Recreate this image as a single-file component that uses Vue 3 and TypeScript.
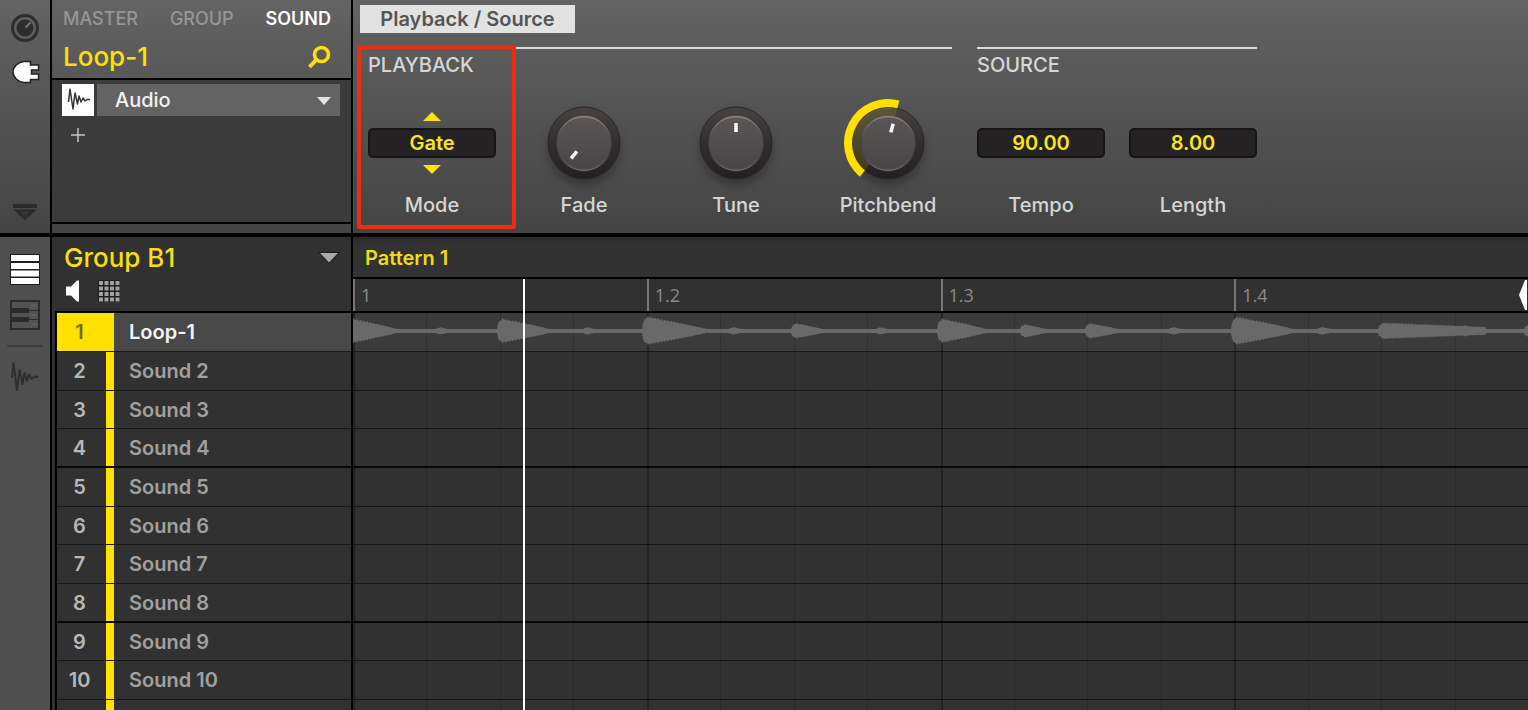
<script setup lang="ts">
import { computed, ref } from 'vue'

interface Knob {
  id: string
  label: string
  angle: number
  arc: boolean
}

interface Hit {
  at: number
  peak: number
  length: number
  sustain?: boolean
}

const scopes = ['MASTER', 'GROUP', 'SOUND']
const activeScope = ref('SOUND')

const plugin = ref('Audio')
const modes = ['Oneshot', 'Gate', 'Loop']
const mode = ref('Gate')
const tempo = ref('90.00')
const length = ref('8.00')

const knobs = ref<Knob[]>([
  { id: 'fade', label: 'Fade', angle: -140, arc: false },
  { id: 'tune', label: 'Tune', angle: 0, arc: false },
  { id: 'pitchbend', label: 'Pitchbend', angle: 15, arc: true },
])

const sounds = ['Loop-1', ...Array.from({ length: 9 }, (_, i) => `Sound ${i + 2}`)]
const selected = ref(0)
const beats = ['1', '1.2', '1.3', '1.4']

function stepMode(delta: number) {
  const next = modes.indexOf(mode.value) + delta
  mode.value = modes[Math.min(modes.length - 1, Math.max(0, next))]
}

function point(angle: number, radius: number): string {
  const rad = (angle * Math.PI) / 180
  return `${(46 + radius * Math.sin(rad)).toFixed(2)} ${(46 - radius * Math.cos(rad)).toFixed(2)}`
}

function arcPath(angle: number, radius: number): string {
  const large = angle + 140 > 180 ? 1 : 0
  return `M${point(-140, radius)}A${radius} ${radius} 0 ${large} 1 ${point(angle, radius)}`
}

const hits: Hit[] = [
  { at: -4, peak: 14, length: 54 },
  { at: 84, peak: 5, length: 16 },
  { at: 145, peak: 14, length: 58 },
  { at: 231, peak: 5, length: 16 },
  { at: 290, peak: 16, length: 70 },
  { at: 377, peak: 5, length: 18 },
  { at: 439, peak: 9, length: 38 },
  { at: 524, peak: 5, length: 16 },
  { at: 585, peak: 14, length: 54 },
  { at: 668, peak: 8, length: 32 },
  { at: 733, peak: 9, length: 40 },
  { at: 817, peak: 5, length: 18 },
  { at: 879, peak: 16, length: 68 },
  { at: 965, peak: 5, length: 20 },
  { at: 1026, peak: 9, length: 106, sustain: true },
  { at: 1108, peak: 7, length: 26 },
  { at: 1172, peak: 8, length: 20 },
]

function amplitude(x: number): number {
  let level = 2
  for (const hit of hits) {
    const t = x - hit.at
    if (t < 0 || t > hit.length) continue
    const rise = Math.min(1, 0.6 + t / 10)
    const fall = hit.sustain
      ? Math.max(0, 1 - t / (hit.length * 1.9))
      : Math.pow(1 - t / hit.length, 0.85)
    const ripple = 0.92 + 0.08 * Math.sin(x * 1.9)
    level = Math.max(level, hit.peak * rise * fall * ripple)
  }
  return level
}

const wave = computed(() => {
  const top: string[] = []
  const bottom: string[] = []
  for (let x = 0; x <= 1175; x++) {
    const a = amplitude(x)
    top.push(`${x} ${(18 - a).toFixed(1)}`)
    bottom.unshift(`${x} ${(18 + a * 0.95).toFixed(1)}`)
  }
  return `M${top.join('L')}L${bottom.join('L')}Z`
})
</script>

<template>
  <main class="app">
    <section class="upper">
      <nav class="rail" aria-label="Control views">
        <button type="button" class="icon-button" aria-label="Channel">
          <svg width="32" height="32" viewBox="0 0 32 32">
            <circle cx="16" cy="16" r="12.5" fill="none" stroke="#2d2d2d" stroke-width="3" />
            <circle cx="16" cy="16" r="8.5" fill="#2d2d2d" />
            <path d="M16.5 15.5L21.5 10.5" stroke="#777" stroke-width="2" />
          </svg>
        </button>
        <button type="button" class="icon-button" aria-label="Plug-in">
          <svg width="32" height="32" viewBox="0 0 32 32">
            <path
              d="M15 5.5H21.5V9H29.500V14H22.500V18H29.500V23.500H21.500V26.500H15C9 26 4 21 4 16S9 6 15 5.500Z"
              fill="#fff" stroke="#222" stroke-width="1.500" />
          </svg>
        </button>
        <button type="button" class="icon-button last" aria-label="Collapse">
          <svg width="32" height="32" viewBox="0 0 32 32">
            <path d="M4 8H28V12H4Z" fill="#2b2b2b" />
            <path d="M4.500 13.500H27.500L16 24.500Z" fill="#2b2b2b" />
            <path d="M11 15.500H21L16 20.500Z" fill="#353535" />
          </svg>
        </button>
      </nav>

      <section class="channel">
        <header class="channel-head">
          <div class="scopes">
            <button
              v-for="scope in scopes" :key="scope" type="button" class="scope"
              :class="{ active: scope === activeScope }" @click="activeScope = scope">{{ scope }}</button>
          </div>
          <div class="title-row">
            <h1>Loop-1</h1>
            <button type="button" class="search" aria-label="Browse">
              <svg width="24" height="24" viewBox="0 0 24 24" fill="none" stroke="#ffe000">
                <circle cx="14.500" cy="9.500" r="7" stroke-width="3.600" />
                <path d="M9.500 14.500L2.500 22" stroke-width="4" />
              </svg>
            </button>
          </div>
        </header>
        <div class="slots">
          <div class="slot">
            <span class="slot-icon">
              <svg width="32" height="32" viewBox="0 0 32 32" fill="none" stroke="#333" stroke-width="1.500" stroke-linejoin="round">
                <path d="M6.500 18L8 5L11 25L13 9L15.500 20L17 12L19 18L21 14L23 17L25 15.500H28" />
              </svg>
            </span>
            <div class="slot-select">
              <select v-model="plugin" aria-label="Plug-in slot">
                <option>Audio</option>
                <option>Sampler</option>
              </select>
              <svg class="caret" width="14" height="8" viewBox="0 0 14 8"><path d="M0 0H14L7 8Z" fill="#e4e4e4" /></svg>
            </div>
          </div>
          <button type="button" class="add" aria-label="Add plug-in">
            <svg width="14" height="14" viewBox="0 0 14 14"><path d="M7 0V14M0 7H14" stroke="#c4c4c4" stroke-width="1.500" /></svg>
          </button>
        </div>
        <div class="slot-foot"></div>
      </section>

      <section class="controls">
        <button type="button" class="page-tab">Playback / Source</button>
        <div class="groups">
          <fieldset class="group playback">
            <h2>PLAYBACK</h2>
            <div class="params">
              <div class="param">
                <div class="stage">
                  <button type="button" class="step" aria-label="Previous mode" @click="stepMode(-1)">
                    <svg width="18" height="9" viewBox="0 0 18 9"><path d="M0 9L9 0L18 9Z" fill="#ffe000" /></svg>
                  </button>
                  <select id="mode" v-model="mode" class="value">
                    <option v-for="m in modes" :key="m">{{ m }}</option>
                  </select>
                  <button type="button" class="step" aria-label="Next mode" @click="stepMode(1)">
                    <svg width="18" height="9" viewBox="0 0 18 9"><path d="M0 0H18L9 9Z" fill="#ffe000" /></svg>
                  </button>
                </div>
                <label for="mode">Mode</label>
              </div>
              <div v-for="knob in knobs" :key="knob.id" class="param">
                <div class="stage">
                  <svg class="knob" width="92" height="92" viewBox="0 0 92 92">
                    <defs>
                      <linearGradient :id="`rim-${knob.id}`" x1="0" y1="0" x2="0" y2="1">
                        <stop offset="0" stop-color="#484341" />
                        <stop offset="0.500" stop-color="#332f30" />
                        <stop offset="1" stop-color="#231f20" />
                      </linearGradient>
                      <linearGradient :id="`cap-${knob.id}`" x1="0" y1="0" x2="0" y2="1">
                        <stop offset="0" stop-color="#5b5555" />
                        <stop offset="1" stop-color="#494647" />
                      </linearGradient>
                      <linearGradient :id="`edge-${knob.id}`" x1="0" y1="0" x2="0" y2="1">
                        <stop offset="0" stop-color="#8d8683" />
                        <stop offset="0.400" stop-color="#4b4747" />
                        <stop offset="0.700" stop-color="#464243" />
                        <stop offset="1" stop-color="#6c6666" />
                      </linearGradient>
                    </defs>
                    <circle class="rim" cx="46" cy="46" r="36" :fill="`url(#rim-${knob.id})`" stroke="#2a2728" stroke-width="1" />
                    <template v-if="knob.arc">
                      <path :d="arcPath(knob.angle, 32)" fill="none" stroke="#ffe000" stroke-opacity="0.130" stroke-width="9" />
                      <path :d="arcPath(knob.angle, 40)" fill="none" stroke="#ffe000" stroke-width="8" />
                    </template>
                    <circle cx="46" cy="46.500" r="27" :fill="`url(#cap-${knob.id})`" :stroke="`url(#edge-${knob.id})`" stroke-width="1.500" />
                    <path :d="`M${point(knob.angle, 11)}L${point(knob.angle, 20)}`" stroke="#fff" stroke-width="3.500" />
                  </svg>
                  <input :id="knob.id" v-model.number="knob.angle" class="dial" type="range" min="-140" max="140" />
                </div>
                <label :for="knob.id">{{ knob.label }}</label>
              </div>
            </div>
            <div class="highlight"></div>
          </fieldset>
          <fieldset class="group">
            <h2>SOURCE</h2>
            <div class="params">
              <div class="param">
                <div class="stage"><input id="tempo" v-model="tempo" class="value" type="text" /></div>
                <label for="tempo">Tempo</label>
              </div>
              <div class="param">
                <div class="stage"><input id="length" v-model="length" class="value" type="text" /></div>
                <label for="length">Length</label>
              </div>
            </div>
          </fieldset>
        </div>
      </section>
    </section>

    <section class="lower">
      <nav class="rail editor-rail" aria-label="Editor views">
        <button type="button" class="icon-button" aria-label="Group view">
          <svg width="32" height="32" viewBox="0 0 32 32">
            <path d="M1 1H31V32H1Z" fill="#1c1c1c" />
            <path d="M2 2H30V8H2ZM2 10H30V16H2ZM2 17.500H30V23.500H2ZM2 25H30V31H2Z" fill="#fff" />
          </svg>
        </button>
        <button type="button" class="icon-button" aria-label="Keyboard view">
          <svg width="32" height="32" viewBox="0 0 32 32">
            <path d="M2 2H30V30H2Z" fill="#525252" stroke="#2b2b2b" stroke-width="2" />
            <path d="M2 11.500H30M2 20.500H30" stroke="#2b2b2b" stroke-width="1" />
            <path d="M2 9H20V14H2ZM2 18H20V23H2Z" fill="#2b2b2b" />
            <path d="M22 6.500H28M22 16H28M22 25.500H28" stroke="#5f5f5f" stroke-width="2" />
          </svg>
        </button>
        <hr />
        <button type="button" class="icon-button" aria-label="Sample view">
          <svg width="32" height="32" viewBox="0 0 32 32" fill="none" stroke="#2e2e2e" stroke-width="2" stroke-linejoin="round">
            <path d="M3 17L4.500 2L8 29L10.500 9L13.500 23L15.500 12L18 20L20 13.500L22.500 18L25.500 15.500L29 16" />
          </svg>
        </button>
      </nav>

      <section class="sounds">
        <header class="group-head">
          <button type="button" class="group-name">
            <span>Group B1</span>
            <svg width="22" height="12" viewBox="0 0 22 12"><path d="M0 0H22L11 12Z" fill="#1d1d1d" /><path d="M2 1H20L11 10.500Z" fill="#aaa" /></svg>
          </button>
          <div class="tools">
            <button type="button" aria-label="Mute">
              <svg width="16" height="24" viewBox="0 0 16 24"><path d="M1 7.500H6L12 1.500H14V22.500H12L6 16.500H1Z" fill="#fff" /></svg>
            </button>
            <button type="button" aria-label="Pad view">
              <svg width="24" height="24" viewBox="0 0 24 24">
                <path d="M1 1H23V23H1Z" fill="#1d1d1d" />
                <path d="M2 4H23M2 9.500H23M2 15H23M2 20.500H23" stroke="#a2a2a2" stroke-width="4" stroke-dasharray="4 1.500" />
              </svg>
            </button>
          </div>
        </header>
        <ol class="sound-list">
          <li v-for="(sound, i) in sounds" :key="sound" class="line">
            <button type="button" class="sound" :class="{ selected: i === selected }" @click="selected = i">
              <span class="number">{{ i + 1 }}</span>
              <span class="stripe"></span>
              <span class="name">{{ sound }}</span>
            </button>
          </li>
          <li class="line" aria-hidden="true">
            <div class="sound"><span></span><span class="stripe"></span></div>
          </li>
        </ol>
      </section>

      <section class="timeline">
        <header class="pattern">Pattern 1</header>
        <div class="arranger">
          <div class="ruler">
            <span v-for="beat in beats" :key="beat" class="beat">{{ beat }}</span>
            <svg class="loop-end" width="8" height="32" viewBox="0 0 8 32"><path d="M8 1V31H6L0 16L6 1Z" fill="#fff" /></svg>
          </div>
          <div class="lanes">
            <div v-for="n in sounds.length + 1" :key="n" class="line lane">
              <svg v-if="n === 1" class="wave" viewBox="0 0 1175 38" preserveAspectRatio="none"><path :d="wave" fill="#696969" /></svg>
            </div>
            <div class="divisions"><i v-for="n in 16" :key="n"></i></div>
          </div>
          <div class="playhead"></div>
        </div>
      </section>
    </section>
  </main>
</template>

<style>
body {
  background: #313131;
}
</style>

<style scoped>
* {
  box-sizing: border-box;
}

.app {
  display: flex;
  flex-direction: column;
  height: 100vh;
  overflow: hidden;
  font-family: Inter, "Liberation Sans", sans-serif;
  font-size: 20px;
  font-weight: 500;
  line-height: 24px;
  color: #d6d6d6;
  background: #313131;
}

button,
select,
input {
  appearance: none;
  margin: 0;
  padding: 0;
  border: 0;
  border-radius: 0;
  background: none;
  color: inherit;
  font: inherit;
}

svg {
  display: block;
  flex: none;
}

h1,
h2,
ol,
fieldset,
hr {
  margin: 0;
  padding: 0;
  border: 0;
  font-weight: 500;
  list-style: none;
}

.upper,
.lower {
  display: grid;
  grid-template-columns: 50px 301px minmax(0, 1fr);
}

.upper {
  flex: none;
  border-bottom: 4px solid #000;
  background: linear-gradient(#646464, #5c5c5c 20%, #444);
}

.lower {
  flex: 1;
  min-height: 0;
}

.rail {
  display: flex;
  flex-direction: column;
  align-items: center;
  gap: 12px;
  padding: 12px 0 5px;
}

.icon-button.last {
  margin-top: auto;
}

.editor-rail {
  gap: 14px;
  padding-top: 16px;
  background: #4f4f4f;
}

.editor-rail hr {
  width: 36px;
  height: 2px;
  background: #3e3e3e;
}

.channel {
  display: flex;
  flex-direction: column;
  border-left: 2px solid #000;
}

.channel-head {
  height: 80px;
  padding: 7px 20px 0 11px;
  border-bottom: 2px solid #000;
}

.scopes {
  display: flex;
  justify-content: space-between;
  font-size: 18px;
}

.scope {
  color: #969696;
}

.scope.active {
  color: #fff;
  font-weight: 600;
}

.title-row {
  display: flex;
  align-items: center;
  justify-content: space-between;
  padding-top: 10px;
}

h1 {
  color: #ffe000;
  font-size: 26px;
  line-height: 32px;
}

.slots {
  flex: 1;
  padding: 4px 11px 0 10px;
  background: #3b3b3b;
}

.slot {
  display: flex;
  gap: 3px;
}

.slot-icon {
  background: #fff;
}

.slot-select {
  position: relative;
  flex: 1;
  background: #636363;
}

.slot-select select {
  width: 100%;
  height: 32px;
  padding-left: 18px;
  color: #f2f2f2;
}

.caret {
  position: absolute;
  top: 13px;
  right: 9px;
  pointer-events: none;
}

.add {
  margin: 12px 0 0 9px;
}

.slot-foot {
  height: 11px;
  border-top: 2px solid #000;
}

.controls {
  padding: 5px 0 16px 7px;
  border-left: 2px solid #000;
}

.page-tab {
  display: block;
  width: 215px;
  height: 28px;
  background: #e2e2e2;
  color: #555;
}

.groups {
  display: flex;
  gap: 25px;
  padding: 14px 0 0 8px;
}

.group {
  position: relative;
  min-width: 0;
  border-top: 2px solid #d9d9d9;
}

h2 {
  padding-top: 4px;
  font-size: 20px;
  line-height: 24px;
}

.params {
  display: flex;
  gap: 24px;
  padding-top: 19px;
}

.param {
  display: flex;
  flex-direction: column;
  align-items: center;
  width: 128px;
}

.stage {
  position: relative;
  display: flex;
  flex-direction: column;
  align-items: center;
  justify-content: center;
  gap: 7px;
  width: 100%;
  height: 94px;
  margin-bottom: 3px;
}

.value {
  width: 100%;
  height: 30px;
  border: 2px solid #161414;
  border-radius: 5px;
  background: #252223;
  color: #f8e514;
  text-align: center;
  text-align-last: center;
}

.knob {
  overflow: visible;
}

.rim {
  filter: drop-shadow(0 5px 5px rgba(0, 0, 0, 0.3));
}

.dial {
  position: absolute;
  inset: 8px 28px;
  opacity: 0;
}

.highlight {
  position: absolute;
  top: -4px;
  left: -11px;
  width: 159px;
  height: 184px;
  border: 4px solid #ef2b10;
  border-radius: 2px;
  pointer-events: none;
}

.sounds {
  padding-left: 3px;
  border-left: 2px solid #000;
  background: #313131;
}

.group-head {
  height: 74px;
  padding: 5px 11px 0 9px;
}

.group-name {
  display: flex;
  align-items: center;
  justify-content: space-between;
  width: 100%;
  color: #f8df10;
  font-size: 26px;
  line-height: 32px;
}

.tools {
  display: flex;
  gap: 16px;
  padding-top: 5px;
  padding-left: 1px;
}

.sound-list {
  border-top: 2px solid #000;
  border-left: 2px solid #000;
}

.line {
  height: 39px;
  border-bottom: 1px solid #181818;
}

.line:nth-child(3n) {
  height: 38px;
}

.line:nth-child(4n) {
  border-bottom: 2px solid #080808;
}

.sound {
  display: grid;
  grid-template-columns: 49px 8px 1fr;
  align-items: center;
  width: 100%;
  height: 100%;
  color: #a0a0a0;
  font-weight: 600;
  text-align: left;
}

.number {
  padding-right: 4px;
  color: #b8b8b8;
  text-align: center;
}

.stripe {
  height: 100%;
  background: #ffe000;
}

.name {
  padding-left: 15px;
}

.sound.selected {
  background: linear-gradient(90deg, #ffe000 57px, #484848 57px);
  color: #f4f4f4;
}

.selected .number {
  color: #776900;
}

.timeline {
  min-width: 0;
  border-left: 2px solid #000;
}

.pattern {
  height: 42px;
  padding: 9px 12px 0;
  border-bottom: 2px solid #000;
  background: linear-gradient(#2a2a2a, #323232 8px);
  color: #f0dc12;
}

.page-tab,
.value,
.pattern {
  font-weight: 600;
}

.arranger {
  position: relative;
}

.ruler {
  position: relative;
  display: grid;
  grid-template-columns: repeat(4, 1fr);
  height: 34px;
  border-bottom: 2px solid #000;
}

.beat {
  padding: 4px 6px 0;
  border-left: 2px solid #777;
  color: #8b8b8b;
  font-family: "Open Sans", "Noto Sans", sans-serif;
  font-size: 18px;
  font-weight: 400;
}

.loop-end {
  position: absolute;
  top: 0;
  right: 1px;
}

.lanes {
  position: relative;
}

.lane:first-child {
  background: #3b3b3b;
}

.wave {
  position: relative;
  z-index: 1;
  width: 100%;
  height: 38px;
}

.divisions {
  position: absolute;
  inset: 0;
  display: grid;
  grid-template-columns: repeat(16, 1fr);
}

.divisions i {
  border-left: 1px solid rgba(0, 0, 0, 0.15);
}

.divisions i:nth-child(4n + 1) {
  border-left: 2px solid rgba(0, 0, 0, 0.3);
}

.playhead {
  position: absolute;
  z-index: 2;
  top: 0;
  bottom: 0;
  left: 14.5%;
  width: 2px;
  background: #fff;
}
</style>
